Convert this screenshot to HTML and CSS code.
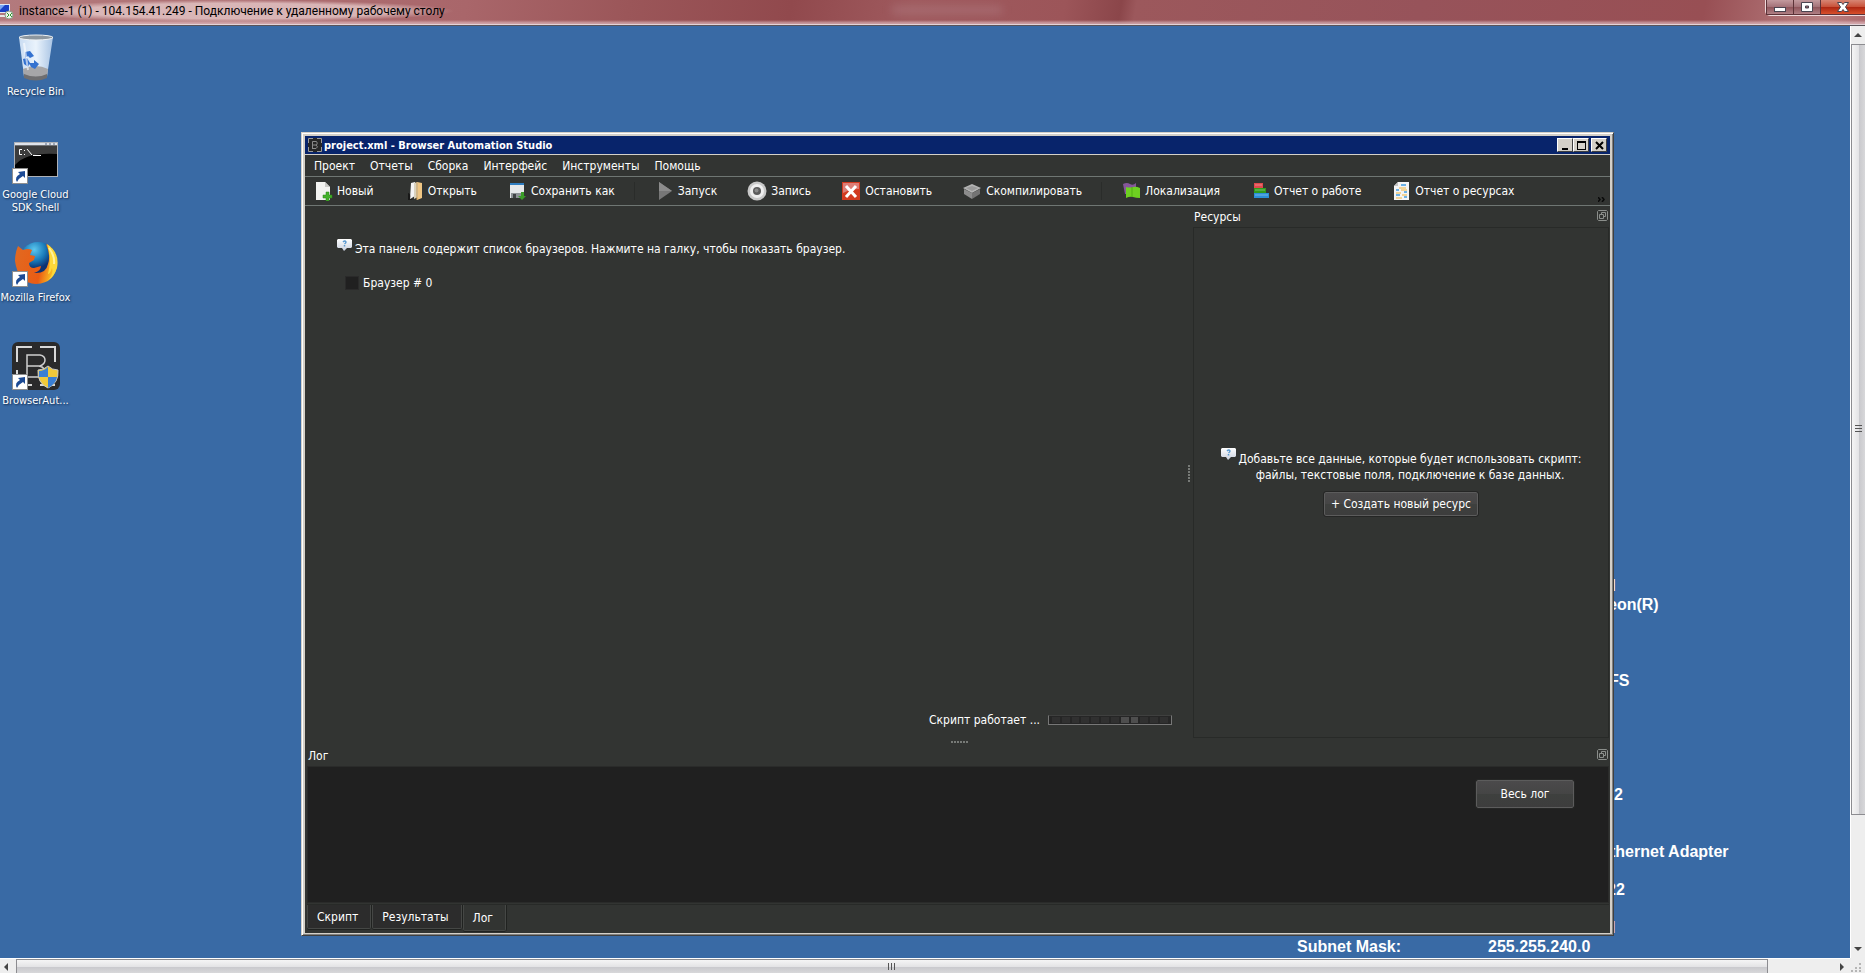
FILE: index.html
```html
<!DOCTYPE html>
<html lang="ru">
<head>
    <meta charset="utf-8">
    <title>instance-1 (1) - 104.154.41.249</title>
    <meta name="viewport" content="width=device-width, initial-scale=1">
    <link rel="stylesheet" href="styles.css">
</head>
<body>
    <header class="rdpBar">
        <svg class="rdpIcon" width="14" height="16" viewBox="0 0 14 16">
            <rect x="0" y="1" width="10" height="9" fill="#dfe6f2"/>
            <rect x="0" y="2" width="9" height="7" fill="#1a3fc4"/>
            <path d="M0 2h5l-5 5z" fill="#7ba5f2"/>
            <path d="M0 12h6v2H0z" fill="#e8e8e8"/>
            <circle cx="9" cy="12" r="4" fill="#eef5ea" stroke="#8a9a88"/>
            <path d="M7 10l2 2-2 2M12 10l-2 2 2 2" fill="none" stroke="#2f9a2f"/>
        </svg>
        <h1 class="rdpTitle">instance-1 (1) - 104.154.41.249 - Подключение к удаленному рабочему столу</h1>
        <div class="rdpGhost"></div>
        <div class="rdpButtons">
            <button class="rdpBtn" aria-label="Свернуть">
                <svg width="14" height="12" viewBox="0 0 14 12"><rect x="1.500" y="6.500" width="11" height="4" fill="#fff" stroke="#4a4450"/></svg>
            </button>
            <button class="rdpBtn" aria-label="Развернуть">
                <svg width="14" height="12" viewBox="0 0 14 12"><path d="M1.500 1.500h11v9h-11zM5.500 5v2h3V5z" fill="#fff" fill-rule="evenodd" stroke="#4a4450"/></svg>
            </button>
            <button class="rdpBtn rdpClose" aria-label="Закрыть">
                <svg width="14" height="12" viewBox="0 0 14 12"><path d="M1.500 1.500h4L7 3.500l1.500-2h4L9.500 6l3 4.500h-4L7 8.500l-1.500 2h-4l3-4.500z" fill="#fff" stroke="#4a4450"/></svg>
            </button>
        </div>
    </header>

    <div class="session">
        <main class="desktop">
            <!-- desktop shortcuts -->
            <nav class="shortcuts">
                <a class="shortcut" href="#">
                    <svg width="48" height="48" viewBox="0 0 48 48">
                        <defs>
                            <linearGradient id="glass"><stop offset="0" stop-color="#c9dcf2"/><stop offset=".5" stop-color="#eaf3fc"/><stop offset="1" stop-color="#a9c4e4"/></linearGradient>
                        </defs>
                        <path d="M7 4l5 39q11 6 23 0l6-39z" fill="url(#glass)"/>
                        <path d="M11 36q13-6 25 0l-1 8q-11 6-23 0z" fill="#a6a6a8"/>
                        <path d="M12 41q12 5 23 0l0 4q-11 5-23 0z" fill="#6e6e70"/>
                        <ellipse cx="24" cy="4.500" rx="17" ry="2.500" fill="#8d979f" stroke="#eef2f5"/>
                        <path d="M13 19l5-1 4 5-4 2-2-2-3 2zM11 26l4-1 3 5-2 4-4-3zM19 34l-2-4 5 0 0-3 5 4-4 5z" fill="#3472d0"/>
                        <path d="M12 10l4 27" stroke="#fff" stroke-width="2" opacity=".6"/>
                    </svg>
                    <span>Recycle Bin</span>
                </a>
                <a class="shortcut" href="#">
                    <svg width="48" height="48" viewBox="0 0 48 48">
                        <rect x="2.500" y="6.500" width="43" height="34" fill="#000" stroke="#aeb2b8"/>
                        <path d="M3 10h42v8Q14 16 3 29z" fill="#3c3c3c"/>
                        <path d="M3 7h42v2.500H3z" fill="#dfe3ea"/>
                        <path d="M33 8h2M37 8h2M41 8h2" stroke="#5a6a86"/>
                        <path d="M10 13.500H7.500v5H10M12.500 14v1M12.500 18v1M15 13l5 6M21 19.500h8" fill="none" stroke="#fff"/>
                        <use href="#arrow"/>
                    </svg>
                    <span>Google Cloud SDK Shell</span>
                </a>
                <a class="shortcut" href="#">
                    <svg width="48" height="48" viewBox="0 0 48 48">
                        <defs>
                            <radialGradient id="globe" cx=".4" cy=".2"><stop offset="0" stop-color="#5cc7ee"/><stop offset=".6" stop-color="#1878b8"/><stop offset="1" stop-color="#0c3272"/></radialGradient>
                            <linearGradient id="fox" x1="0" y1="0" x2="1" y2=".2"><stop offset="0" stop-color="#e06a22"/><stop offset=".7" stop-color="#ea5c14"/><stop offset="1" stop-color="#fbc022"/></linearGradient>
                        </defs>
                        <circle cx="26" cy="22" r="19" fill="url(#globe)"/>
                        <path d="M3 22Q3 14 6 7l5 4q5-2 9 0l-2 5 5 1-1 4-5 3q0 5 5 5l7-2q0 5-7 7 12 1 14-9 3-9-2-20 10 5 11 19-1 20-21 21Q6 44 3 22z" fill="url(#fox)"/>
                        <path d="M35 5q13 8 10 24-3 9-9 12 6-6 4-12-2 6-4 6 4-15-1-30z" fill="#fcd83a"/>
                        <path d="M37 9q6 8 5 16" stroke="#fff19a" stroke-width="2" fill="none"/>
                        <use href="#arrow"/>
                    </svg>
                    <span>Mozilla Firefox</span>
                </a>
                <a class="shortcut" href="#">
                    <svg width="48" height="48" viewBox="0 0 48 48">
                        <rect x="0" y="0" width="48" height="48" rx="6" fill="#2a2a2b"/>
                        <path d="M5 20V5h15M28 5h15v15M5 28v15h15M28 43h15" fill="none" stroke="#d8d8d8" stroke-width="2"/>
                        <path d="M15 42V13h13q5 1 5 5t-5 6H15M27 24q7 1 7 10M15 35h12" fill="none" stroke="#cfcfcf" stroke-width="1.500"/>
                        <path d="M26 28q6 0 10-4 4 4 10 4 1 13-10 18-11-5-10-18z" fill="#f0c93a" stroke="#c9c9c9"/>
                        <path d="M27 29q5 0 9-4v10h-9zM36 35h9q-1 7-9 11z" fill="#3a7fd4"/>
                        <use href="#arrow"/>
                    </svg>
                    <span>BrowserAut...</span>
                </a>
            </nav>

            <!-- wallpaper system info -->
            <div class="sysInfo">
                <span class="sysLine edition">d</span>
                <span class="sysLine cpu">eon(R)</span>
                <span class="sysLine fs">FS</span>
                <span class="sysLine service">2</span>
                <span class="sysLine adapter">thernet Adapter</span>
                <span class="sysLine host">22</span>
                <span class="sysLine domain">l</span>
                <span class="sysLine maskLabel">Subnet Mask:</span>
                <span class="sysLine mask">255.255.240.0</span>
            </div>

            <section class="window">
                <header class="titleBar">
                    <svg width="14" height="14" viewBox="0 0 14 14">
                        <rect width="14" height="14" fill="#262626"/>
                        <path d="M.5 5V.5H5M9 .5h4.500V5M.5 9v4.500H5M9 13.500h4.500V9" fill="none" stroke="#9a9a9a"/>
                        <path d="M4.500 11V3.500h4q1.500 1.500 0 3.500h-4M8 7q3 2 0 3.500H4.500" fill="none" stroke="#8a8a8a"/>
                    </svg>
                    <h2 class="titleText">project.xml - Browser Automation Studio</h2>
                    <div class="titleButtons">
                        <button class="classicBtn" aria-label="Свернуть"><svg width="11" height="9" viewBox="0 0 11 9"><path d="M2 7h6v2H2z"/></svg></button>
                        <button class="classicBtn" aria-label="Развернуть"><svg width="11" height="9" viewBox="0 0 11 9"><path d="M1 0h9v9H1zM2 2v6h7V2z" fill-rule="evenodd"/></svg></button>
                        <button class="classicBtn classicClose" aria-label="Закрыть"><svg width="11" height="9" viewBox="0 0 11 9"><path d="M2 1l7 7M9 1L2 8" stroke="#000" stroke-width="2"/></svg></button>
                    </div>
                </header>

                <nav class="menuBar">
                    <button>Проект</button>
                    <button>Отчеты</button>
                    <button>Сборка</button>
                    <button>Интерфейс</button>
                    <button>Инструменты</button>
                    <button>Помощь</button>
                </nav>

                <div class="toolBar">
                    <button class="tool">
                        <svg width="20" height="20" viewBox="0 0 20 20"><path d="M3 1h9l5 5v13H3z" fill="#f2f2f0"/><path d="M12 1v5h5z" fill="#c9c9c6"/><path d="M13 11h3v3h3v3h-3v3h-3v-3h-3v-3h3z" fill="#43b02a" stroke="#2a8418" stroke-width=".5"/></svg>
                        Новый
                    </button>
                    <button class="tool">
                        <svg width="20" height="20" viewBox="0 0 20 20"><path d="M13 1l5 1v15l-5 2z" fill="#efc684"/><path d="M7 2l4-1v14l-5 3z" fill="#f4f4f4"/><path d="M10 2l4-1v15l-4 2z" fill="#d9d2bf"/><path d="M4 12q3 0 2 6l4 1H4z" fill="#181818"/><path d="M13 1v18" stroke="#c99a50"/></svg>
                        Открыть
                    </button>
                    <button class="tool">
                        <svg width="20" height="20" viewBox="0 0 20 20"><path d="M3 3h14v14H3z" fill="#e6e8ea"/><path d="M3 2h14v2H3z" fill="#2f7dc0"/><path d="M4 12h10v5H4z" fill="#8d9296"/><path d="M6 13h3v4H6z" fill="#3e4144"/><path d="M14 11h3v4h2l-4 4-4-4h3z" fill="#3a9c28"/></svg>
                        Сохранить как
                    </button>
                    <span class="toolSep"></span>
                    <button class="tool">
                        <svg width="20" height="20" viewBox="0 0 20 20"><path d="M5 1l13 9-13 9z" fill="#777"/><path d="M5 1l13 9H5z" fill="#8c8c8c"/></svg>
                        Запуск
                    </button>
                    <button class="tool">
                        <svg width="20" height="20" viewBox="0 0 20 20"><circle cx="10" cy="10" r="9.500" fill="#c9c9c9"/><circle cx="10" cy="10" r="7" fill="#efefef"/><circle cx="10" cy="10" r="4" fill="#5c5c5c"/><circle cx="9.500" cy="9.500" r="2" fill="#8a8a8a"/></svg>
                        Запись
                    </button>
                    <button class="tool">
                        <svg width="20" height="20" viewBox="0 0 20 20"><rect x="1" y="1" width="18" height="18" fill="#d23a20"/><path d="M2 2h16v6q-8 0-16 4z" fill="#dc7d76"/><path d="M5 5l10 11M15 5L5 16" stroke="#fff" stroke-width="3"/></svg>
                        Остановить
                    </button>
                    <button class="tool">
                        <svg width="20" height="20" viewBox="0 0 20 20"><path d="M1 7l9-4 9 4-9 5z" fill="#b4b4b4"/><path d="M2 8l8 4v6l-8-5z" fill="#8c8c8c"/><path d="M18 8l-8 4v6l8-5z" fill="#747474"/><path d="M4 7l6 3 6-3-6-2z" fill="#9a9a9a"/></svg>
                        Скомпилировать
                    </button>
                    <span class="toolSep"></span>
                    <button class="tool">
                        <svg width="20" height="20" viewBox="0 0 20 20"><path d="M2 3q4-2 7 0t6-1v11H4z" fill="#85569a"/><path d="M5 6q4 1 7 0t7 1v10q-4 0-7-1t-7 1z" fill="#6ed021"/><path d="M11 6v10" stroke="#4fae12"/></svg>
                        Локализация
                    </button>
                    <button class="tool">
                        <svg width="20" height="20" viewBox="0 0 20 20"><path d="M4 2h9v5H4z" fill="#e0484c"/><path d="M4 7h12v5H4z" fill="#2f9a1c"/><path d="M4 12h15v5H4z" fill="#2b8fd8"/><path d="M5 4h7M5 9h10M5 14h13" stroke="#fff" opacity=".35"/></svg>
                        Отчет о работе
                    </button>
                    <button class="tool">
                        <svg width="20" height="20" viewBox="0 0 20 20"><path d="M3 5l4-4h11v18H3z" fill="#f4f4f4"/><path d="M3 5h4V1z" fill="#c4c4c4"/><path d="M10 4h5M5 9h3M13 11h3M5 14h4M13 16h3" stroke="#3f9be0" stroke-width="1.500"/><path d="M8 7h7M10 9h6M5 12h5M11 14h5M5 17h6" stroke="#efb43c"/></svg>
                        Отчет о ресурсах
                    </button>
                    <button class="toolMore" aria-label="Еще">
                        <svg width="8" height="5" viewBox="0 0 8 5"><path d="M0 0l2 2.500L0 5M4 0l2 2.500L4 5" fill="none" stroke="#0a0a0a" stroke-width="1.500"/></svg>
                    </button>
                </div>

                <div class="workArea">
                    <section class="browsers">
                        <p class="hint">
                            <svg class="bubble" width="15" height="12" viewBox="0 0 15 12"><use href="#bubble"/></svg>
                            Эта панель содержит список браузеров. Нажмите на галку, чтобы показать браузер.
                        </p>
                        <label class="browserItem"><input type="checkbox"> Браузер # 0</label>
                        <div class="status">
                            <span>Скрипт работает ...</span>
                            <div class="progress" role="progressbar" aria-label="Скрипт работает">
                                <i></i><i></i><i></i><i></i><i></i><i></i><i></i><i class="on"></i><i class="on"></i><i></i><i></i><i></i>
                            </div>
                        </div>
                    </section>
                    <div class="gripV"></div>
                    <section class="resources">
                        <header class="dockTitle">
                            <h3>Ресурсы</h3>
                            <button class="floatBtn" aria-label="Открепить"><svg width="11" height="11" viewBox="0 0 11 11"><use href="#float"/></svg></button>
                        </header>
                        <div class="resourceBox">
                            <p class="resourceHint">
                                <svg class="bubble" width="15" height="12" viewBox="0 0 15 12"><use href="#bubble"/></svg>
                                <span>Добавьте все данные, которые будет использовать скрипт:<br>файлы, текстовые поля, подключение к базе данных.</span>
                            </p>
                            <button class="darkBtn">+ Создать новый ресурс</button>
                        </div>
                    </section>
                </div>

                <div class="gripH"></div>

                <section class="logDock">
                    <header class="dockTitle">
                        <h3>Лог</h3>
                        <button class="floatBtn" aria-label="Открепить"><svg width="11" height="11" viewBox="0 0 11 11"><use href="#float"/></svg></button>
                    </header>
                    <div class="logBox">
                        <button class="darkBtn logBtn">Весь лог</button>
                    </div>
                    <nav class="tabs">
                        <button class="tab">Скрипт</button>
                        <button class="tab">Результаты</button>
                        <button class="tab active">Лог</button>
                    </nav>
                </section>
            </section>
        </main>

        <div class="scrollV">
            <svg width="13" height="18" viewBox="0 0 13 18"><path d="M3 11l4-4 4 4z" fill="#444"/></svg>
            <div class="trackV">
                <div class="thumbV"><svg width="7" height="9" viewBox="0 0 7 9"><path d="M0 .5h7M0 3.500h7M0 6.500h7" stroke="#555"/></svg></div>
            </div>
            <svg width="13" height="18" viewBox="0 0 13 18"><path d="M3 7l4 4 4-4z" fill="#444"/></svg>
        </div>
        <div class="scrollH">
            <svg width="16" height="14" viewBox="0 0 16 14"><path d="M8 4L4 8l4 4z" fill="#444"/></svg>
            <div class="trackH">
                <div class="thumbH"><svg width="9" height="7" viewBox="0 0 9 7"><path d="M.5 0v7M3.500 0v7M6.500 0v7" stroke="#555"/></svg></div>
            </div>
            <svg width="16" height="14" viewBox="0 0 16 14"><path d="M6 4l4 4-4 4z" fill="#444"/></svg>
        </div>
        <div class="corner">
            <svg width="13" height="14" viewBox="0 0 13 14"><path d="M9 5h2v2H9zM5 9h2v2H5zM9 9h2v2H9zM1 12h2v2H1zM5 12h2v2H5zM9 12h2v2H9z" fill="#b5b5b5"/></svg>
        </div>
    </div>

    <!-- shared shapes -->
    <svg class="defs" width="0" height="0">
        <defs>
            <linearGradient id="bubbleFill" x1="0" y1="0" x2="0" y2="1"><stop offset="0" stop-color="#ffffff"/><stop offset="1" stop-color="#c8cfdd"/></linearGradient>
            <g id="bubble">
                <path d="M1 0h13l1 1v7l-1 1h-4l-3 3-2-3H1L0 8V1z" fill="url(#bubbleFill)"/>
                <path d="M6 3q2-2 3 0 0 1-1.500 2M7.500 6v1.500" fill="none" stroke="#5b9ad0" stroke-width="1.500"/>
            </g>
            <g id="float" fill="none" stroke="#8b8e8b">
                <path d="M1.500 .5h8l1 1v8l-1 1h-8l-1-1v-8z"/>
                <path d="M2.500 4.500h4v4h-4zM4.500 4V2.500h4v4H7"/>
            </g>
            <g id="arrow">
                <rect x=".5" y="32.500" width="15" height="15" fill="#fff" stroke="#8f8f8f"/>
                <path d="M5 46q-3-5 3-8l-2-2 7-1v7l-2-2q-4 2-6 6z" fill="#1c4a94"/>
            </g>
        </defs>
    </svg>
</body>
</html>
```
FILE: styles.css
```css
* {
    box-sizing: border-box;
}

body {
    margin: 0;
    height: 100vh;
    display: flex;
    flex-direction: column;
    overflow: hidden;
    font-family: "DejaVu Sans Condensed", Tahoma, sans-serif;
    font-size: 12px;
    color: #ffffff;
}

button {
    margin: 0;
    padding: 0;
    border: 0;
    background: none;
    color: inherit;
    font: inherit;
}

h1, h2, h3, p {
    margin: 0;
    font-size: inherit;
    font-weight: normal;
}

svg {
    display: block;
    flex: none;
}

.defs {
    position: absolute;
}

/* remote session bar */
.rdpBar {
    display: flex;
    align-items: flex-start;
    height: 26px;
    flex: none;
    background:
        linear-gradient(rgba(255, 255, 255, 0) 20px, rgba(232, 200, 205, 0.6) 23px),
        linear-gradient(100deg, #b37a7d 0, #a9666a 460px, #9b5659 620px, #91494d 780px, #9f5a5e 900px, #9c5559 1050px, #8b464a 1105px, #9c585c 1120px, #97535a 1400px, #984f54 1680px, #b98082 1800px, #ad6b6f 100%);
    border-bottom: 1px solid #5b5358;
    box-shadow: inset 0 -1px #e3d3d8;
}

.rdpIcon {
    margin-top: 3px;
}

.rdpTitle {
    width: 440px;
    padding: 0 0 0 5px;
    line-height: 22px;
    font-family: Roboto, "Segoe UI", sans-serif;
    font-size: 12px;
    color: #000000;
    white-space: nowrap;
    background: radial-gradient(closest-side, rgba(232, 205, 205, 0.75) 70%, rgba(232, 205, 205, 0));
}

.rdpGhost {
    width: 110px;
    height: 8px;
    margin: 6px auto 0 438px;
    background: rgba(190, 150, 158, 0.3);
    filter: blur(4px);
}

.rdpButtons {
    display: flex;
    margin-top: -1px;
    border: 1px solid #f0d9db;
    border-top: 0;
    border-right: 0;
    border-radius: 0 0 0 5px;
}

.rdpBtn {
    width: 27px;
    height: 16px;
    display: flex;
    align-items: center;
    justify-content: center;
    border: 1px solid #5c3338;
    border-width: 0 0 1px 1px;
    background: linear-gradient(#c8a0a4, #a5747a 50%, #8d5258 52%, #b08085);
}

.rdpClose {
    width: 45px;
    background: linear-gradient(#d98d7c, #c9543c 50%, #ab2410 52%, #d8502c);
}

/* session area */
.session {
    flex: 1;
    min-height: 0;
    display: grid;
    grid-template-columns: 1fr 15px;
    grid-template-rows: 1fr 15px;
}

.desktop {
    position: relative;
    overflow: hidden;
    background: #396aa5;
}

.shortcuts {
    width: 71px;
    display: flex;
    flex-direction: column;
    padding-top: 7px;
}

.shortcut {
    height: 103px;
    display: flex;
    flex-direction: column;
    align-items: center;
    gap: 4px;
    text-align: center;
    font-size: 11px;
    line-height: 13px;
    color: #ffffff;
    text-decoration: none;
    text-shadow: 1px 1px 2px #10284a;
}

.sysLine {
    position: absolute;
    font: bold 16px/19px "Liberation Sans", Arial, sans-serif;
    white-space: nowrap;
}

.edition { left: 1606px; top: 550px; }
.cpu { left: 1608px; top: 569px; }
.fs { left: 1609px; top: 645px; }
.service { left: 1614px; top: 759px; }
.adapter { left: 1610px; top: 816px; }
.host { left: 1607px; top: 854px; }
.domain { left: 1611px; top: 892px; }
.maskLabel { left: 1297px; top: 911px; }
.mask { left: 1488px; top: 911px; }

/* application window */
.window {
    position: absolute;
    left: 301px;
    right: 236px;
    top: 106px;
    bottom: 22px;
    display: flex;
    flex-direction: column;
    padding: 2px;
    border: 1px solid #d4d0c8;
    border-right-color: #404040;
    border-bottom-color: #404040;
    box-shadow: inset 1px 1px #ffffff, inset -1px -1px #808080;
    background: #d4d0c8;
}

.window::before {
    content: "";
    flex: none;
    height: 1px;
}

.titleBar {
    display: flex;
    align-items: center;
    gap: 2px;
    height: 18px;
    margin: 0 1px;
    padding: 0 3px;
    flex: none;
    background: #08246b;
}

.titleText {
    font-size: 11px;
    font-weight: bold;
}

.titleButtons {
    display: flex;
    margin-left: auto;
}

.classicBtn {
    width: 16px;
    height: 14px;
    display: flex;
    align-items: center;
    justify-content: center;
    background: #d4d0c8;
    border: 1px solid #ffffff;
    border-right-color: #404040;
    border-bottom-color: #404040;
}

.classicClose {
    margin-left: 2px;
}

.menuBar {
    display: flex;
    gap: 15px;
    height: 22px;
    margin: 1px 1px 0;
    padding: 0 9px;
    flex: none;
    background: #323432;
    border-bottom: 1px solid #6f7673;
}

.toolBar {
    display: flex;
    align-items: center;
    gap: 30px;
    height: 29px;
    margin: 0 1px;
    padding: 0 4px 0 8px;
    flex: none;
    background: #323432;
    border-bottom: 1px solid #6f7673;
}

.tool {
    display: flex;
    align-items: center;
    gap: 4px;
    white-space: nowrap;
}

.toolSep {
    width: 1px;
    height: 18px;
    margin: 0 -11px;
    background: #2a2c2a;
}

.toolMore {
    margin-left: auto;
    align-self: flex-end;
    padding-bottom: 3px;
}

.workArea {
    flex: 1;
    min-height: 0;
    display: flex;
    margin: 0 1px;
    background: #323432;
}

.browsers {
    flex: 1;
    display: flex;
    flex-direction: column;
    align-items: flex-start;
    padding: 33px 11px 11px 32px;
}

.hint {
    display: flex;
    gap: 3px;
    line-height: 20px;
}

.browserItem {
    display: flex;
    align-items: center;
    gap: 4px;
    margin: 15px 0 0 8px;
    line-height: 18px;
}

.browserItem input {
    appearance: none;
    width: 14px;
    height: 14px;
    margin: 0;
    background: #202020;
    border: 1px solid #2a2a2a;
}

.status {
    display: flex;
    align-items: center;
    gap: 8px;
    margin: auto 0 0 auto;
    line-height: 20px;
}

.progress {
    display: flex;
    gap: 2px;
    width: 124px;
    height: 10px;
    padding: 1px 3px;
    background: #262626;
    border: 1px solid #777777;
    border-top-color: #3f403f;
}

.progress i {
    flex: 1;
    background: #303030;
}

.progress .on {
    background: #4e4e4e;
}

/* dotted splitter handles */
.gripV {
    width: 2px;
    height: 17px;
    margin: 0 3px 0 5px;
    align-self: center;
    background: repeating-linear-gradient(#777a77 0 2px, transparent 2px 3px);
}

.gripH {
    flex: none;
    height: 4px;
    margin: 0 1px;
    padding-left: 4px;
    background: #323432;
}

.gripH::before {
    content: "";
    display: block;
    width: 17px;
    height: 2px;
    margin: 0 auto;
    background: repeating-linear-gradient(90deg, #777a77 0 2px, transparent 2px 3px);
}

.resources {
    width: 417px;
    display: flex;
    flex-direction: column;
    padding: 0 1px 3px 0;
}

.dockTitle {
    display: flex;
    justify-content: space-between;
    align-items: flex-start;
    height: 21px;
    flex: none;
    line-height: 22px;
    padding: 0 0 0 1px;
}

.floatBtn {
    padding: 4px 1px 0 0;
}

.resourceBox {
    flex: 1;
    display: flex;
    flex-direction: column;
    align-items: center;
    justify-content: center;
    gap: 9px;
    padding-bottom: 2px;
    border: 1px solid #282a28;
}

.resourceHint {
    display: flex;
    gap: 3px;
    line-height: 16px;
    text-align: center;
    white-space: nowrap;
}

.resourceHint span {
    padding-top: 3px;
}

.darkBtn {
    height: 24px;
    padding: 0 6px;
    border: 1px solid #5c5c5c;
    border-radius: 2px;
    outline: 1px solid #252625;
    background: linear-gradient(#4b4a4b, #454545 50%, #3e403e 51%, #3d3d3d);
}

.logDock {
    height: 188px;
    display: flex;
    flex-direction: column;
    flex: none;
    margin: 0 1px;
    padding: 0 1px 1px 2px;
    background: #323432;
}

.logBox {
    flex: 1;
    padding: 13px 34px;
    display: flex;
    justify-content: flex-end;
    align-items: flex-start;
    background: #202020;
    border: 1px solid #2a2b2a;
}

.logBtn {
    width: 98px;
    height: 28px;
}

.tabs {
    display: flex;
    align-items: flex-start;
    gap: 1px;
    height: 28px;
    flex: none;
    margin-top: 1px;
    border-top: 1px solid #282a28;
}

.tab {
    height: 24px;
    padding: 0 12px 0 9px;
    border: 1px solid #454745;
    border-top: 0;
    border-radius: 0 0 2px 2px;
    box-shadow: 0 1px #202220, 1px 0 #202220;
    background: #2c2c2c;
}

.tab.active {
    height: 26px;
    background: #323432;
}

/* session scroll bars */
.scrollV {
    display: flex;
    flex-direction: column;
    background: #eeeeee;
    border-left: 1px solid #ffffff;
}

.trackV {
    flex: 1;
}

.thumbV {
    height: 86%;
    display: flex;
    align-items: center;
    justify-content: center;
    border: 1px solid #8c8c90;
    border-right: 0;
    background: linear-gradient(90deg, #f5f5f5, #e4e4e6 50%, #c8c8cc 52%, #d8d8da);
}

.scrollH {
    display: flex;
    background: #eeeeee;
    border-top: 1px solid #ffffff;
}

.trackH {
    flex: 1;
    padding-right: 66px;
}

.thumbH {
    height: 100%;
    display: flex;
    align-items: center;
    justify-content: center;
    border: 1px solid #8c8c90;
    border-bottom: 0;
    background: linear-gradient(#f5f5f5, #e4e4e6 50%, #c8c8cc 52%, #d8d8da);
}

.corner {
    background: #eeeeee;
}
```
